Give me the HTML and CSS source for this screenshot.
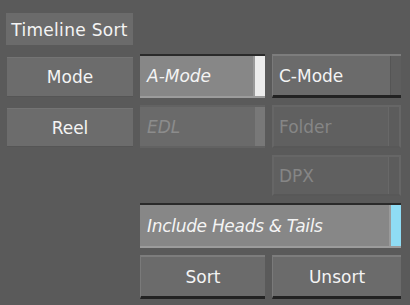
FILE: index.html
```html
<!DOCTYPE html>
<html>
<head>
<meta charset="utf-8">
<link rel="stylesheet" href="styles.css">
</head>
<body>
<div class="panel">
  <div class="title">Timeline Sort</div>
  <div class="grid">
    <div class="label">Mode</div>
    <div class="toggle on"><span class="txt">A-Mode</span><span class="ind white"></span></div>
    <div class="btn raised left"><span class="txt">C-Mode</span><span class="ind dark"></span></div>

    <div class="label">Reel</div>
    <div class="toggle disabled"><span class="txt">EDL</span><span class="ind grey"></span></div>
    <div class="btn disabled left"><span class="txt">Folder</span><span class="ind flat"></span></div>

    <div class="empty"></div>
    <div class="empty"></div>
    <div class="btn disabled left"><span class="txt">DPX</span><span class="ind flat"></span></div>

    <div class="empty"></div>
    <div class="toggle on wide"><span class="txt">Include Heads &amp; Tails</span><span class="ind blue"></span></div>

    <div class="empty"></div>
    <div class="btn raised center">Sort</div>
    <div class="btn raised center">Unsort</div>
  </div>
</div>
</body>
</html>
```
FILE: styles.css
```css
html, body {
  margin: 0;
  padding: 0;
  background: #5a5a5a;
  width: 410px;
  height: 305px;
  overflow: hidden;
}
.panel {
  padding: 13px 0 0 6px;
  font-family: "DejaVu Sans", sans-serif;
  font-size: 17px;
  color: #f4f4f4;
}
.title {
  width: 127px;
  height: 32px;
  box-sizing: border-box;
  background: #6b6b6b;
  display: flex;
  align-items: center;
  justify-content: center;
  letter-spacing: 0.3px;
  padding-top: 1px;
}
.grid {
  margin-top: 9px;
  margin-left: 1px;
  display: grid;
  grid-template-columns: 126px 125px 129px;
  grid-template-rows: 44px 43px 41px 45px 44px;
  column-gap: 7px;
  row-gap: 7px;
}
.label {
  background: #6c6c6c;
  border-top: 1px solid #747474;
  border-bottom: 1px solid #555;
  margin-top: 3px;
  margin-bottom: 1px;
  display: flex;
  align-items: center;
  justify-content: center;
}
.toggle, .btn {
  display: flex;
  align-items: stretch;
  box-sizing: border-box;
  position: relative;
}
.txt {
  flex: 1;
  display: flex;
  align-items: center;
  padding-left: 7px;
  white-space: nowrap;
}
.ind {
  width: 10px;
}
.toggle.on {
  background: #878787;
  border-top: 2px solid #2a2a2a;
  border-bottom: 2px solid #9c9c9c;
  font-style: italic;
}
.toggle.on.wide .txt {
  letter-spacing: -0.3px;
}
.toggle.on .ind.white {
  background: #ececec;
  border-left: 2px solid #9a9a9a;
}
.toggle.on .ind.blue {
  background: #8fdcf4;
  border-left: 2px solid #9a9a9a;
}
.wide {
  grid-column: 2 / span 2;
}
.toggle.disabled {
  background: #6a6a6a;
  border-top: 2px solid #626262;
  border-bottom: 2px solid #626262;
  color: #8c8c8c;
  font-style: italic;
}
.toggle.disabled .ind.grey {
  background: #787878;
}
.btn.raised {
  background: #6b6b6b;
  border-top: 2px solid #7d7d7d;
  border-left: 1px solid #7a7a7a;
  border-bottom: 3px solid #222;
}
.btn.raised .txt {
  padding-left: 6px;
}
.btn.raised .ind.dark {
  background: #5e5e5e;
  border-left: 1px solid #555;
}
.btn.center {
  justify-content: center;
  align-items: center;
}
.btn.disabled {
  background: #606060;
  border: 2px solid #666;
  border-bottom-color: #585858;
  color: #868686;
}
.btn.disabled .ind.flat {
  background: #5c5c5c;
  border-left: 1px solid #686868;
}
.btn.disabled .txt {
  padding-left: 5px;
}
```
